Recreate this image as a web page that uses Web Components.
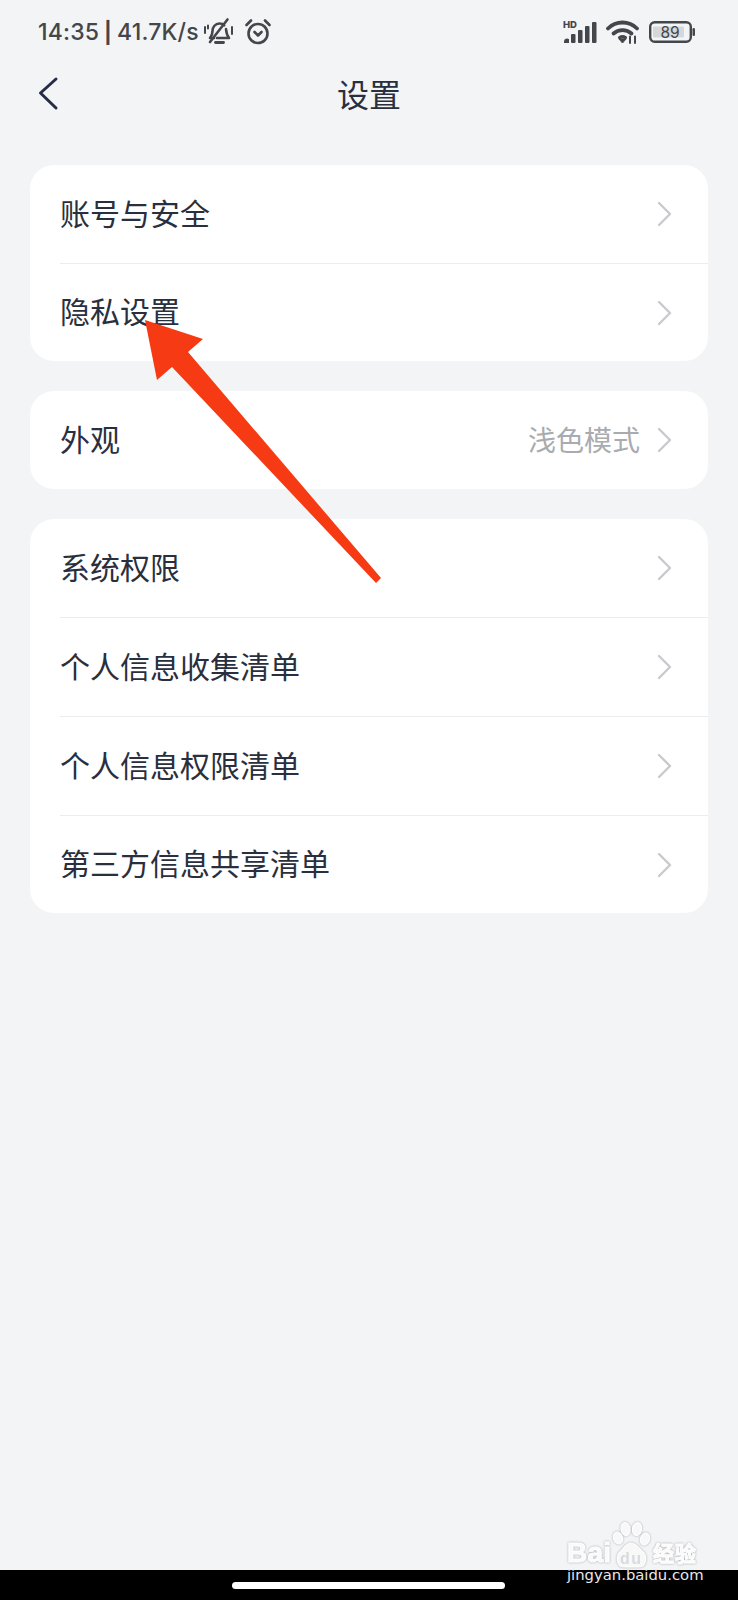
<!DOCTYPE html>
<html lang="zh-CN">
<head>
    <meta charset="UTF-8">
    <meta name="viewport" content="width=device-width, initial-scale=1.0">
    <title>设置</title>
    <style>
        html, body {
            margin: 0;
            padding: 0;
        }

        body {
            width: 738px;
            height: 1600px;
            position: relative;
            overflow: hidden;
            background: #f3f4f6;
            color: #2a2f3e;
            font-family: "Noto Sans CJK SC", "Noto Sans", sans-serif;
            display: flex;
            flex-direction: column;
        }

        main {
            flex: 1;
            display: flex;
            flex-direction: column;
            gap: 30px;
            padding: 0 30px;
        }
    </style>
</head>
<body>
    <status-bar></status-bar>
    <nav-header>设置</nav-header>
    <main>
        <settings-card>
            <settings-row height="98">账号与安全</settings-row>
            <settings-row height="98">隐私设置</settings-row>
        </settings-card>
        <settings-card>
            <settings-row height="98" value="浅色模式">外观</settings-row>
        </settings-card>
        <settings-card>
            <settings-row height="98">系统权限</settings-row>
            <settings-row height="99">个人信息收集清单</settings-row>
            <settings-row height="99">个人信息权限清单</settings-row>
            <settings-row height="98">第三方信息共享清单</settings-row>
        </settings-card>
    </main>
    <home-bar></home-bar>
    <red-arrow></red-arrow>
    <baidu-mark></baidu-mark>

    <script>
        class StatusBar extends HTMLElement {
            constructor() {
                super();
                this.attachShadow({ mode: 'open' });
                this.shadowRoot.innerHTML = `
                    <style>
                        :host {
                            display: flex;
                            align-items: center;
                            height: 64px;
                            padding: 0 43px 0 38px;
                            color: #43464b;
                            font-family: Inter, Roboto, sans-serif;
                        }
                        .time {
                            font-size: 23px;
                            font-weight: 500;
                            white-space: nowrap;
                            letter-spacing: .2px;
                            word-spacing: -1.5px;
                        }
                        .bar { font-size: 21px; font-weight: 700; }
                        .left, .right { display: flex; align-items: center; }
                        .left svg:first-of-type { margin-left: 4px; }
                        .left svg:last-of-type { margin-left: 9px; }
                        .right { margin-left: auto; gap: 9px; }
                        svg { display: block; }
                        svg text { font-family: Inter, Roboto, sans-serif; }
                    </style>
                    <div class="left">
                        <span class="time">14:35 <span class="bar">|</span> 41.7K/s</span>
                        <svg width="32" height="30" viewBox="0 0 32 30" fill="none" stroke="#43464b" stroke-width="2.600" stroke-linecap="round" stroke-linejoin="round">
                            <path d="M11 21h-4c1.800-2 2.500-4 2.500-7 0-4 2.800-7.500 7-7.500 2 0 3.500.6 4.700 1.800"/>
                            <path d="M23 12c.3 3.500 1 6.500 3 9H14"/>
                            <path d="M24.500 2.500 7 25"/>
                            <path d="M12.500 25.500h8" stroke-width="2.800"/>
                            <path d="M2 10v6M5 8.500v3M29 10v7" stroke-width="2"/>
                        </svg>
                        <svg width="28" height="28" viewBox="0 0 28 28" fill="none" stroke="#43464b" stroke-width="2.600" stroke-linecap="round" stroke-linejoin="round">
                            <circle cx="14" cy="15.500" r="9.500"/>
                            <path d="M10.500 14l3.500 3.500 3.500-3.500"/>
                            <path d="M2.500 7 7 2.500M25.500 7 21 2.500"/>
                        </svg>
                    </div>
                    <div class="right">
                        <svg width="34" height="24" viewBox="0 0 34 24">
                            <text x="0" y="8" font-size="9.500" font-weight="800" fill="#43464b">HD</text>
                            <g fill="#43464b">
                                <path d="M1 23v-1.500a3 3 0 0 1 5-2.200V23z"/>
                                <rect x="8" y="14" width="4.500" height="9" rx="1"/>
                                <rect x="15" y="10" width="4.500" height="13" rx="1"/>
                                <rect x="22" y="6" width="4.500" height="17" rx="1"/>
                                <rect x="29" y="2" width="4.500" height="21" rx="1"/>
                            </g>
                        </svg>
                        <svg width="34" height="24" viewBox="0 0 34 24" fill="none" stroke="#43464b" stroke-linecap="round">
                            <path d="M2 8.500C10 .5 23 .5 31 8.500" stroke-width="3.800"/>
                            <path d="M7.500 13.500c5-4.500 13-4.500 18 0" stroke-width="3.800"/>
                            <path d="M13.500 17.500c2-1.300 4-1.300 6 0" stroke-width="3"/>
                            <path d="M13 19 16.500 23l3.500-4z" fill="#43464b" stroke-width="1"/>
                            <path d="M24 23v-6.500M29 16.500V23" stroke-width="2"/>
                        </svg>
                        <svg width="46" height="22" viewBox="0 0 46 22">
                            <rect x="1.200" y="1.200" width="40.600" height="19.600" rx="4.500" fill="none" stroke="#43464b" stroke-width="2.400"/>
                            <rect x="4" y="5.500" width="31" height="11" rx="1.500" fill="#d6d7d9"/>
                            <rect x="43.500" y="7" width="2.500" height="8" rx="1.200" fill="#43464b"/>
                            <text x="21" y="16.500" font-size="15.500" text-anchor="middle" fill="#43464b">89</text>
                        </svg>
                    </div>
                `;
            }
        }

        class NavHeader extends HTMLElement {
            constructor() {
                super();
                this.attachShadow({ mode: 'open' });
                this.shadowRoot.innerHTML = `
                    <style>
                        :host {
                            display: flex;
                            position: relative;
                            align-items: center;
                            justify-content: center;
                            height: 64px;
                            margin-bottom: 37px;
                            font-size: 32px;
                            color: #2a2f3e;
                        }
                        span { margin-top: -6px; }
                        svg {
                            position: absolute;
                            left: 38px;
                            top: 12px;
                        }
                    </style>
                    <svg width="22" height="36" viewBox="0 0 22 36" fill="none" stroke="#262c47" stroke-width="3" stroke-linecap="round" stroke-linejoin="round">
                        <path d="M18 3 2.500 17 18 32"/>
                    </svg>
                    <span><slot></slot></span>
                `;
            }
        }

        class SettingsCard extends HTMLElement {
            constructor() {
                super();
                this.attachShadow({ mode: 'open' });
                this.shadowRoot.innerHTML = `
                    <style>
                        :host {
                            display: block;
                            background: #fff;
                            border-radius: 24px;
                            overflow: hidden;
                        }
                    </style>
                    <slot></slot>
                `;
            }
        }

        class SettingsRow extends HTMLElement {
            constructor() {
                super();
                this.attachShadow({ mode: 'open' });
                const value = this.getAttribute('value');
                const height = this.getAttribute('height') || '98';
                this.shadowRoot.innerHTML = `
                    <style>
                        :host {
                            display: flex;
                            align-items: center;
                            box-sizing: border-box;
                            height: ${height}px;
                            margin-left: 30px;
                            padding-right: 36px;
                            font-size: 30px;
                            color: #2a2f3e;
                        }
                        :host(:not(:first-child)) {
                            border-top: 1px solid #ecedef;
                        }
                        .label { margin-top: -5px; }
                        .value {
                            margin: -3px 0 0 auto;
                            font-size: 28px;
                            color: #a9abaf;
                        }
                        svg {
                            display: block;
                            margin-left: ${value ? '17px' : 'auto'};
                        }
                    </style>
                    <span class="label"><slot></slot></span>
                    ${value ? `<span class="value">${value}</span>` : ''}
                    <svg width="15" height="26" viewBox="0 0 15 26" fill="none" stroke="#c9cacd" stroke-width="2.400" stroke-linecap="round" stroke-linejoin="round">
                        <path d="M2 2l11 11L2 24"/>
                    </svg>
                `;
            }
        }

        class HomeBar extends HTMLElement {
            constructor() {
                super();
                this.attachShadow({ mode: 'open' });
                this.shadowRoot.innerHTML = `
                    <style>
                        :host {
                            display: flex;
                            justify-content: flex-start;
                            align-items: center;
                            height: 30px;
                            padding-left: 232px;
                            padding-top: 1px;
                            box-sizing: border-box;
                            background: #000;
                        }
                        div {
                            width: 273px;
                            height: 7px;
                            border-radius: 4px;
                            background: #fff;
                        }
                    </style>
                    <div></div>
                `;
            }
        }

        // annotation drawn over the screenshot
        class RedArrow extends HTMLElement {
            constructor() {
                super();
                this.attachShadow({ mode: 'open' });
                this.shadowRoot.innerHTML = `
                    <style>
                        :host {
                            position: absolute;
                            left: 0;
                            top: 0;
                            width: 738px;
                            height: 600px;
                            pointer-events: none;
                        }
                        svg { display: block; }
                    </style>
                    <svg width="738" height="600" viewBox="0 0 738 600">
                        <polygon fill="#f63b14" points="145,320 203,339 188,352 381,578 376,583 172,367 157,380"/>
                    </svg>
                `;
            }
        }

        class BaiduMark extends HTMLElement {
            constructor() {
                super();
                this.attachShadow({ mode: 'open' });
                this.shadowRoot.innerHTML = `
                    <style>
                        :host {
                            position: absolute;
                            left: 550px;
                            top: 1515px;
                            width: 160px;
                            height: 72px;
                            font-family: "DejaVu Sans", sans-serif;
                            color: #fff;
                        }
                        svg {
                            position: absolute;
                            left: 0;
                            top: 0;
                            filter: drop-shadow(0 0 .8px #a6a8ac);
                        }
                        .logo {
                            font-family: "Liberation Sans", "Noto Sans CJK SC", sans-serif;
                            font-weight: 700;
                            fill: #fafafb;
                            stroke: #fff;
                            stroke-width: 1;
                        }
                        .url {
                            position: absolute;
                            left: 17px;
                            top: 53px;
                            font-size: 14.800px;
                            line-height: 14px;
                            white-space: nowrap;
                            color: #e8e8e8;
                        }
                    </style>
                    <svg width="160" height="54" viewBox="0 0 160 54">
                        <g fill="#f8f8f9" stroke="#fff" stroke-width="1.200">
                            <ellipse cx="68" cy="23" rx="4.500" ry="6" transform="rotate(-20 68 23)"/>
                            <ellipse cx="75.500" cy="14" rx="4.500" ry="6.500" transform="rotate(-10 75.500 14)"/>
                            <ellipse cx="87" cy="14" rx="4.500" ry="6.500" transform="rotate(10 87 14)"/>
                            <ellipse cx="95" cy="24" rx="4.500" ry="6" transform="rotate(20 95 24)"/>
                            <path d="M81 28c-5 0-7 5-10 8-5 3-6 16 4 16h13c10 0 9-13 4-16-3-3-6-8-11-8z"/>
                        </g>
                        <text class="logo" x="17" y="47" font-size="28" textLength="44">Bai</text>
                        <text class="logo" x="70" y="49" font-size="16" textLength="21" style="fill:#d9dade;stroke:none">du</text>
                        <text class="logo" x="103" y="46" font-size="21" textLength="43">经验</text>
                    </svg>
                    <div class="url">jingyan.baidu.com</div>
                `;
            }
        }

        customElements.define('status-bar', StatusBar);
        customElements.define('nav-header', NavHeader);
        customElements.define('settings-card', SettingsCard);
        customElements.define('settings-row', SettingsRow);
        customElements.define('home-bar', HomeBar);
        customElements.define('red-arrow', RedArrow);
        customElements.define('baidu-mark', BaiduMark);
    </script>
</body>
</html>
